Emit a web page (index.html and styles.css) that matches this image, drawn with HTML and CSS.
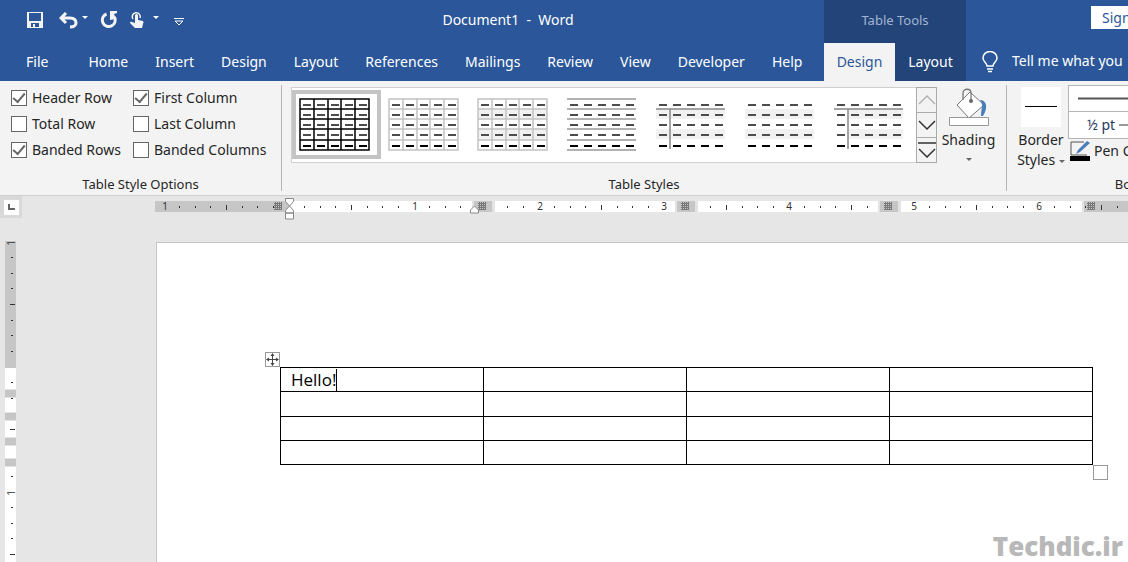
FILE: index.html
```html
<!DOCTYPE html>
<html lang="en">
<head>
<meta charset="utf-8">
<title>Document1 - Word</title>
<link rel="stylesheet" href="styles.css">
</head>
<body>
<svg class="defs" aria-hidden="true">
  <defs>
    <g id="cells"><path d="M1 1h69v51H1zM1 11h69M1 21h69M1 31h69M1 42h69M15 1v51M29 1v51M42 1v51M56 1v51" fill="none"/></g>
    <g id="dashes"><path d="M4 7h67M4 17h67M4 27h67M4 37h67" stroke="#4c4c4c" stroke-width="2" stroke-dasharray="8 6"/><path d="M4 48h67" stroke="#000" stroke-width="2" stroke-dasharray="8 6"/></g>
    <g id="bands" fill="#f1f1f1"><path d="M1 11h69v10H1zM1 31h69v10H1z"/></g>
    <pattern id="inch" x="134" width="125" height="11" patternUnits="userSpaceOnUse"><path d="M15 5h1v2h-1zM31 5h1v2h-1zM46 5h1v2h-1zM62 4h1v5h-1zM78 5h1v2h-1zM93 5h1v2h-1zM109 5h1v2h-1z" fill="#333"/></pattern>
    <pattern id="inchv" y="126" width="11" height="125" patternUnits="userSpaceOnUse"><path d="M6 15h2v1H6zM6 31h2v1H6zM6 46h2v1H6zM5 62h5v1H5zM6 78h2v1H6zM6 93h2v1H6zM6 109h2v1H6z" fill="#333"/></pattern>
    <g id="col"><path d="M0 0h23v11H0z" fill="#e3e3e3"/><path d="M2 0h18v11H2z" fill="#c6c6c6"/></g>
    <path id="grip" d="M1 1v8M3 1v8M5 1v8M7 1v8M0 2h8M0 4h8M0 6h8M0 8h8" stroke="#777" shape-rendering="crispEdges"/>
  </defs>
</svg>

<header class="header">
  <div class="titlebar">
    <div class="quick">
      <button class="qbtn save" aria-label="Save"><svg width="17" height="17" viewBox="0 0 17 17"><path d="M0 0h16v16H0zM2 1v8h12V1zM4 11v4h2v-3h2v3h4v-4z" fill="#f4f4f4" fill-rule="evenodd"/></svg></button>
      <button class="qbtn undo" aria-label="Undo"><svg width="30" height="17" viewBox="0 0 30 17"><path d="M7 1L2 6l5 5M3 6h8c4 0 6 2 6 5 0 2-2 4-6 4" fill="none" stroke="#f4f4f4" stroke-width="3"/><path d="M23 4h6l-3 3z" fill="#fff"/></svg></button>
      <button class="qbtn redo" aria-label="Repeat"><svg width="18" height="18" viewBox="0 0 18 18"><path d="M6.500 3A6.500 6.500 0 1 0 14.500 6" fill="none" stroke="#f4f4f4" stroke-width="3"/><path d="M10 0h7v2l-3 1 2 5-6 1z" fill="#f4f4f4"/></svg></button>
      <button class="qbtn touch" aria-label="Touch mode"><svg width="30" height="18" viewBox="0 0 30 18"><path d="M3 8a4 4 0 1 1 7-1" fill="none" stroke="#f4f4f4" stroke-width="1.500"/><path d="M5 4q1.500-2 3 0v5l5 1q1 1 0 3l-1 4H5l-5-5q0-2 2-1l3 1z" fill="#f4f4f4"/><path d="M23 5h6l-3 3z" fill="#fff"/></svg></button>
      <button class="qbtn more" aria-label="Customize Quick Access Toolbar"><svg width="12" height="8" viewBox="0 0 12 8"><path d="M1 .5h10M2 3h8L6 7z" fill="none" stroke="#fff"/></svg></button>
    </div>
    <div class="title">Document1&nbsp; -&nbsp; Word</div>
  </div>
  <div class="context-title">Table Tools</div>
  <div class="account"><button class="signin">Sign in</button></div>
  <nav class="tabs" aria-label="Ribbon">
    <a class="file" href="#file">File</a><a href="#home">Home</a><a href="#insert">Insert</a><a href="#pagedesign">Design</a><a href="#pagelayout">Layout</a><a href="#references">References</a><a href="#mailings">Mailings</a><a href="#review">Review</a><a href="#view">View</a><a href="#developer">Developer</a><a href="#help">Help</a>
  </nav>
  <nav class="context-tabs" aria-label="Table Tools"><a class="active" href="#design">Design</a><a href="#layout">Layout</a></nav>
  <div class="tell">
    <svg width="16" height="22" viewBox="0 0 16 22"><path d="M5 15c0-3-4-4-4-8a7 6.500 0 0 1 14 0c0 4-4 5-4 8zM5 18h6M6 20.500h4" fill="none" stroke="#fff" stroke-width="1.500"/></svg>
    <a href="#tell">Tell me what you</a>
  </div>
</header>

<section class="ribbon">
  <div class="group options">
    <div class="checks">
      <label><input type="checkbox" checked>Header Row</label>
      <label><input type="checkbox" checked>First Column</label>
      <label><input type="checkbox">Total Row</label>
      <label><input type="checkbox">Last Column</label>
      <label><input type="checkbox" checked>Banded Rows</label>
      <label><input type="checkbox">Banded Columns</label>
    </div>
    <div class="caption">Table Style Options</div>
  </div>
  <div class="group styles">
    <div class="tools">
      <div class="gallery">
        <button class="thumb selected" aria-label="Table Grid"><svg width="72" height="54"><use href="#cells" stroke="#000" stroke-width="1.500"/><use href="#dashes"/></svg></button>
        <button class="thumb" aria-label="Table Grid Light"><svg width="72" height="54"><use href="#cells" stroke="#c2c2c2" stroke-width="1.500"/><use href="#dashes"/></svg></button>
        <button class="thumb" aria-label="Plain Table 1"><svg width="72" height="54"><use href="#bands"/><use href="#cells" stroke="#c2c2c2" stroke-width="1.500"/><use href="#dashes"/></svg></button>
        <button class="thumb" aria-label="Plain Table 2"><svg width="72" height="54"><path d="M1 1h69M1 11h69M1 21h69M1 31h69M1 42h69M1 52h69" stroke="#999" stroke-width="1.500"/><use href="#dashes"/></svg></button>
        <button class="thumb" aria-label="Plain Table 3"><svg width="72" height="54"><use href="#bands"/><path d="M1 11h69M15 11v40" stroke="#888" stroke-width="1.500"/><use href="#dashes"/></svg></button>
        <button class="thumb" aria-label="Plain Table 4"><svg width="72" height="54"><use href="#bands"/><use href="#dashes"/></svg></button>
        <button class="thumb" aria-label="Plain Table 5"><svg width="72" height="54"><path d="M16 11h54v10H16zM16 31h54v10H16z" fill="#f1f1f1"/><path d="M1 11h69M15 11v40" stroke="#888" stroke-width="1.500"/><use href="#dashes"/></svg></button>
      </div>
      <div class="scroll">
        <button class="off" aria-label="Scroll up"><svg width="18" height="10"><path d="M1 9l8-8 8 8" fill="none" stroke="#b5b5b5" stroke-width="1.500"/></svg></button>
        <button aria-label="Scroll down"><svg width="18" height="10"><path d="M1 1l8 8 8-8" fill="none" stroke="#333" stroke-width="1.500"/></svg></button>
        <button aria-label="More styles"><svg width="18" height="16"><path d="M0 1h18M1 7l8 8 8-8" fill="none" stroke="#333" stroke-width="1.500"/></svg></button>
      </div>
      <button class="big shading"><svg width="40" height="39" viewBox="0 0 40 39"><path d="M21 4L35 17 20 30 8 17z" fill="#fff" stroke="#777"/><path d="M14 12V5c0-5 8-5 8 0v8" fill="none" stroke="#777" stroke-width="1.300"/><circle cx="22" cy="13" r="2" fill="#666"/><path d="M31 12c7 0 8 8 3 16h-2c0-8 3-11-1-16z" fill="#4a7ebb"/><path d="M.5 29.500h39v8H.5z" fill="#fff" stroke="#999"/></svg><span>Shading</span><i class="arrow"></i></button>
    </div>
    <div class="caption">Table Styles</div>
  </div>
  <div class="group borders">
    <div class="tools wide">
      <button class="big border-styles"><svg width="40" height="40"><path d="M0 0h40v40H0z" fill="#fff"/><path d="M4 19.500h32" stroke="#000"/></svg><span>Border<br>Styles <i class="arrow"></i></span></button>
      <div class="pen">
        <button class="line" aria-label="Line style"><svg width="90" height="3"><path d="M0 1.500h90" stroke="#555" stroke-width="2"/></svg></button>
        <button class="line weight">½ pt <svg width="60" height="2"><path d="M0 1h60" stroke="#333"/></svg></button>
        <button class="pencolor"><svg width="21" height="20" viewBox="0 0 21 20"><path d="M1 14V1h13M1 14h16" fill="none" stroke="#555"/><path d="M6 13l2-4 9-9 3 2-10 9z" fill="#4a7ebb"/><path d="M0 15h20v5H0z" fill="#000"/></svg>Pen Color <i class="arrow"></i></button>
      </div>
    </div>
    <div class="caption wide">Borders</div>
  </div>
</section>

<main class="workspace">
  <div class="corner"><button aria-label="Tab selector"><svg width="7" height="7"><path d="M1 0v5h6" fill="none" stroke="#666" stroke-width="2"/></svg></button></div>
  <div class="hruler">
    <svg width="100%" height="22">
      <g transform="translate(0 3)">
        <path d="M0 0h134v11H0z" fill="#c6c6c6"/>
        <rect x="134" width="100%" height="11" fill="#fff"/>
        <rect x="927" width="100%" height="11" fill="#e3e3e3"/><rect x="929" width="100%" height="11" fill="#c6c6c6"/>
        <rect width="100%" height="11" fill="url(#inch)"/>
        <use href="#col" x="317"/><use href="#col" x="520"/><use href="#col" x="723"/>
        <use href="#grip" x="119"/><use href="#grip" x="323"/><use href="#grip" x="526"/><use href="#grip" x="729"/><use href="#grip" x="932"/>
        <g class="nums"><text x="10" y="9">1</text><text x="260" y="9">1</text><text x="385" y="9">2</text><text x="509" y="9">3</text><text x="634" y="9">4</text><text x="759" y="9">5</text><text x="884" y="9">6</text></g>
      </g>
      <path d="M130.500 .5h8v3l-4 4.500-4-4.500zM130.500 15v-2.500l4-4.500 4 4.500V15zM130.500 15h8v6h-8z" fill="#fff" stroke="#888"/>
      <path d="M315.500 15v-3l4-4 4 4v3z" fill="#fff" stroke="#888"/>
    </svg>
  </div>
  <div class="vruler">
    <svg width="11" height="100%">
      <rect width="11" height="100%" fill="#fff"/>
      <path d="M0 0h11v127H0z" fill="#c6c6c6"/>
      <rect width="11" height="100%" fill="url(#inchv)"/>
      <path d="M0 148h11v9H0zM0 171h11v9H0zM0 196h11v9H0zM0 217h11v9H0z" fill="#e3e3e3"/>
      <path d="M0 149h11v7H0zM0 172h11v7H0zM0 197h11v7H0zM0 218h11v7H0z" fill="#c6c6c6"/>
      <g class="nums"><text transform="translate(10 2) rotate(-90)">1</text><text transform="translate(10 252) rotate(-90)">1</text></g>
    </svg>
  </div>
  <article class="page">
    <div class="tablewrap">
      <button class="move" aria-label="Move table"><svg width="13" height="13" viewBox="0 0 13 13"><path d="M6.500 2v9M2 6.500h9" stroke="#444"/><path d="M6.500 0l2 3h-4zM6.500 13l2-3h-4zM0 6.500l3-2v4zM13 6.500l-3-2v4z" fill="#444"/></svg></button>
      <table>
        <tr><td><span class="typed">Hello!</span></td><td></td><td></td><td></td></tr>
        <tr><td></td><td></td><td></td><td></td></tr>
        <tr><td></td><td></td><td></td><td></td></tr>
        <tr><td></td><td></td><td></td><td></td></tr>
      </table>
      <button class="resize" aria-label="Resize table"></button>
    </div>
    <div class="watermark">Techdic.ir</div>
  </article>
</main>
</body>
</html>
```
FILE: styles.css
```css
* { box-sizing: border-box; }
html, body { height: 100%; }
body {
  margin: 0;
  display: flex;
  flex-direction: column;
  overflow: hidden;
  background: #e6e6e6;
  color: #262626;
  font: 14px/20px "Noto Sans", "Open Sans", sans-serif;
}
button { font: inherit; color: inherit; background: none; border: 0; padding: 0; }
a { color: inherit; text-decoration: none; }
svg { display: block; flex: none; }
.defs { position: absolute; width: 0; height: 0; }

.header {
  flex: none;
  display: grid;
  grid-template-columns: 824px 142px minmax(0, 1fr);
  grid-template-rows: 43px 38px;
  background: #2b579a;
  color: #fff;
  white-space: nowrap;
}
.titlebar { display: flex; align-items: center; padding-bottom: 3px; }
.quick { display: flex; align-items: center; width: 192px; padding-left: 27px; }
.save { margin-right: 15px; }
.undo { margin-right: 11px; }
.redo { margin-right: 12px; }
.touch { margin-right: 13px; }
.more { padding-top: 4px; }
.title { flex: 1; text-align: center; }
.context-title { background: #224479; color: #a3b5d2; text-align: center; font-size: 13px; line-height: 40px; }
.account { display: flex; justify-content: flex-end; align-items: flex-start; overflow: hidden; padding-top: 6px; }
.signin { flex: none; width: 70px; height: 23px; margin-right: -33px; padding-left: 11px; background: #fff; color: #2b579a; text-align: left; }
.tabs, .context-tabs { display: flex; line-height: 37px; }
.tabs { padding-left: 26px; gap: 27px; }
.file { margin-right: 13px; }
.context-tabs { background: #224479; }
.context-tabs a { flex: 1; text-align: center; }
.context-tabs .active { background: #f3f3f3; color: #2b579a; }
.tell { display: flex; align-items: center; gap: 14px; padding-left: 16px; overflow: hidden; }
.tell a { padding-bottom: 2px; }

.ribbon { flex: none; display: flex; background: #f3f3f3; border-bottom: 1px solid #d0d0d0; padding: 4px 0; }
.group { display: flex; flex-direction: column; justify-content: space-between; height: 106px; border-right: 1px solid #b5b5b5; }
.caption { font-size: 13px; line-height: 14px; text-align: center; }
.options { flex: none; width: 282px; }
.checks { display: grid; grid-template-columns: 122px 1fr; grid-auto-rows: 26px; padding-left: 11px; white-space: nowrap; }
.checks label { display: flex; align-items: center; gap: 5px; }
.checks input {
  appearance: none;
  flex: none;
  width: 16px;
  height: 16px;
  margin: 0;
  border: 1px solid #666;
  background: #fff;
  display: grid;
  place-items: center;
}
.checks input:checked::before {
  content: "";
  width: 10px;
  height: 5px;
  margin-bottom: 3px;
  border: solid #666;
  border-width: 0 0 2px 2px;
  rotate: -50deg;
}
.styles { flex: 1; min-width: 0; padding-left: 9px; }
.styles .caption { padding-right: 9px; }
.tools { display: flex; align-items: flex-start; }
.gallery { flex: 1; display: flex; height: 76px; margin-top: 2px; background: #fff; border: 1px solid #d0d0d0; border-width: 1px 0 1px 1px; overflow: hidden; }
.thumb { flex: none; display: grid; place-items: center; width: 89px; height: 69px; margin-top: 2px; padding: 0 3px 0 0; }
.selected { border: 4px solid #c4c4c4; }
.scroll { flex: none; display: flex; flex-direction: column; width: 21px; height: 76px; margin-top: 2px; border: 1px solid #aaa; }
.scroll button { flex: 1; display: grid; place-items: center; border-top: 1px solid #aaa; }
.scroll .off { border-top: 0; }
.big { flex: none; display: flex; flex-direction: column; align-items: center; padding-top: 2px; }
.shading { width: 69px; padding: 3px 6px 0 0; }
.shading span { padding-top: 3px; }
.shading .arrow { margin-top: 8px; }
.arrow { display: inline-block; border: 3px solid transparent; border-top-color: #666; border-bottom: 0; vertical-align: middle; }
.borders { flex: 0 0 121px; overflow: hidden; border-right: 0; }
.wide { width: 264px; }
.border-styles { width: 61px; padding-left: 7px; }
.border-styles span { padding-top: 3px; white-space: nowrap; }
.pen { flex: 1; }
.line { display: flex; align-items: center; width: 100%; height: 27px; padding-left: 9px; gap: 4px; background: #fff; border: 1px solid #b5b5b5; }
.weight { border-top: 0; padding-left: 18px; color: #1f3a5f; }
.pencolor { display: flex; align-items: center; gap: 3px; padding: 2px; white-space: nowrap; }

.workspace {
  flex: 1;
  min-height: 0;
  display: grid;
  grid-template: 46px minmax(0, 1fr) / 155px minmax(0, 1fr);
}
.corner { width: 22px; height: 22px; background: #d9d9d9; padding: 4px; }
.corner button { display: grid; place-items: center; width: 15px; height: 15px; background: #fff; }
.hruler { padding-top: 2px; overflow: hidden; }
.nums text { font-size: 10px; text-anchor: middle; fill: #333; }
.vruler { padding-left: 5px; margin-top: -1px; overflow: hidden; }
.page {
  margin-left: 1px;
  display: flex;
  flex-direction: column;
  justify-content: space-between;
  padding: 124px 0 0;
  background: #fff;
  border: solid #c6c6c6;
  border-width: 1px 0 0 1px;
}
.tablewrap { position: relative; margin: 0 35px 0 123px; }
table { width: 100%; height: 98px; table-layout: fixed; border-collapse: collapse; color: #000; font: 17px/22px "Open Sans", sans-serif; }
td { height: 24px; padding: 0 0 0 10px; border: 1px solid #000; }
.typed { display: block; width: max-content; border-right: 1px solid #000; }
.move, .resize { position: absolute; width: 15px; height: 15px; background: #fff; border: 1px solid #999; }
.move { right: 100%; bottom: 100%; }
.resize { left: 100%; top: 100%; }
.watermark { padding-right: 5px; text-align: right; color: #b8b8b8; font: 800 26px/32px "Open Sans", sans-serif; }
```
